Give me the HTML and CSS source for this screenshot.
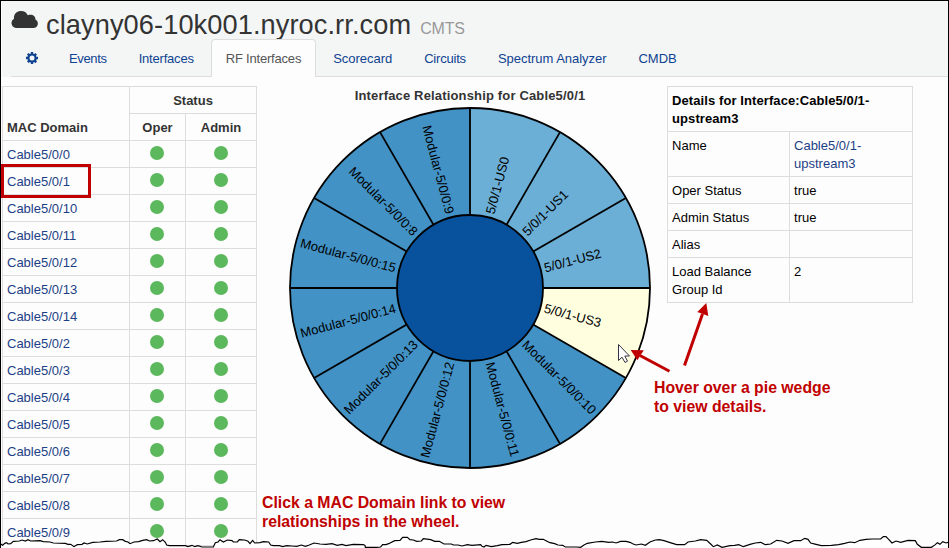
FILE: index.html
```
<!DOCTYPE html>
<html lang="en">
<head>
<meta charset="utf-8">
<title>clayny06-10k001.nyroc.rr.com</title>
<link rel="stylesheet" href="styles.css">
</head>
<body>
<div class="page">
  <header class="header">
    <h1 class="title">
      <svg class="cloud" viewBox="0 0 27 17"><path d="M5 17A5 5 0 0 1 3 7.700C2.500 3 6 0 10 0C13.500 0 15.500 1.500 16.800 4.200C21.500 2.500 24.800 5.500 24.400 8.500A4.500 4.500 0 0 1 22.500 17Z"/></svg>
      <span class="host">clayny06-10k001.nyroc.rr.com</span>
      <small class="kind">CMTS</small>
    </h1>
    <nav class="tabs">
      <a class="tab"><svg class="cog" viewBox="0 -128 1536 1536"><path fill-rule="evenodd" d="M1088 640A320 320 0 1 0 448 640A320 320 0 1 0 1088 640zM1536 531v222q0 12-8 23t-20 13l-185 28q-19 54-39 91 35 50 107 138 10 12 10 25t-9 23q-27 37-99 108t-94 71q-12 0-26-9l-138-108q-44 23-91 38-16 136-29 186-7 28-36 28h-222q-14 0-24.500-8.500t-11.500-21.500l-28-184q-49-16-90-37l-141 107q-10 9-25 9-14 0-25-11-126-114-165-168-7-10-7-23 0-12 8-23 15-21 51-66.500t54-70.500q-27-50-41-99l-183-27q-13-2-21-12.500t-8-23.500v-222q0-12 8-23t19-13l186-28q14-46 39-92-40-57-107-138-10-12-10-24 0-10 9-23 26-36 98.500-107.500t94.500-71.500q13 0 26 10l138 107q44-23 91-38 16-136 29-186 7-28 36-28h222q14 0 24.500 8.500t11.500 21.500l28 184q49 16 90 37l142-107q9-9 24-9 13 0 25 10 129 119 165 170 7 8 7 22 0 12-8 23-15 21-51 66.500t-54 70.500q26 50 41 98l183 28q13 2 21 12.500t8 23.500z"/></svg></a>
      <a class="tab tighter">Events</a>
      <a class="tab tight">Interfaces</a>
      <a class="tab tight active">RF Interfaces</a>
      <a class="tab">Scorecard</a>
      <a class="tab tight">Circuits</a>
      <a class="tab">Spectrum Analyzer</a>
      <a class="tab">CMDB</a>
    </nav>
  </header>

  <main class="content">
    <table class="grid domains">
      <colgroup><col class="c-name"><col class="c-oper"><col class="c-admin"></colgroup>
      <thead>
        <tr><th class="mac" rowspan="2">MAC Domain</th><th colspan="2">Status</th></tr>
        <tr><th>Oper</th><th>Admin</th></tr>
      </thead>
      <tbody>
        <tr><td><a>Cable5/0/0</a></td><td><i class="dot"></i></td><td><i class="dot"></i></td></tr>
        <tr><td class="picked"><a>Cable5/0/1</a></td><td><i class="dot"></i></td><td><i class="dot"></i></td></tr>
        <tr><td><a>Cable5/0/10</a></td><td><i class="dot"></i></td><td><i class="dot"></i></td></tr>
        <tr><td><a>Cable5/0/11</a></td><td><i class="dot"></i></td><td><i class="dot"></i></td></tr>
        <tr><td><a>Cable5/0/12</a></td><td><i class="dot"></i></td><td><i class="dot"></i></td></tr>
        <tr><td><a>Cable5/0/13</a></td><td><i class="dot"></i></td><td><i class="dot"></i></td></tr>
        <tr><td><a>Cable5/0/14</a></td><td><i class="dot"></i></td><td><i class="dot"></i></td></tr>
        <tr><td><a>Cable5/0/2</a></td><td><i class="dot"></i></td><td><i class="dot"></i></td></tr>
        <tr><td><a>Cable5/0/3</a></td><td><i class="dot"></i></td><td><i class="dot"></i></td></tr>
        <tr><td><a>Cable5/0/4</a></td><td><i class="dot"></i></td><td><i class="dot"></i></td></tr>
        <tr><td><a>Cable5/0/5</a></td><td><i class="dot"></i></td><td><i class="dot"></i></td></tr>
        <tr><td><a>Cable5/0/6</a></td><td><i class="dot"></i></td><td><i class="dot"></i></td></tr>
        <tr><td><a>Cable5/0/7</a></td><td><i class="dot"></i></td><td><i class="dot"></i></td></tr>
        <tr><td><a>Cable5/0/8</a></td><td><i class="dot"></i></td><td><i class="dot"></i></td></tr>
        <tr><td><a>Cable5/0/9</a></td><td><i class="dot"></i></td><td><i class="dot"></i></td></tr>
      </tbody>
    </table>

    <section class="chart">
      <h2 class="chart-title">Interface Relationship for Cable5/0/1</h2>
      <svg class="wheel" viewBox="-182 -182 364 364">
        <circle r="180" fill="#4292c6"/>
        <path d="M0 0V-180A180 180 0 0 1 180 0Z" fill="#6baed6"/>
        <path d="M0 0H180A180 180 0 0 1 155.880 90Z" fill="#ffffe0"/>
        <g class="lines">
          <path d="M-180 0H180M0-180V180M-155.880-90L155.880 90M-155.880 90L155.880-90M-90-155.880L90 155.880M-90 155.880L90-155.880"/>
          <circle r="180" fill="none"/>
          <circle r="73" fill="#08519c"/>
        </g>
        <g class="labels">
          <text transform="rotate(-75)" x="77" y="4.500">5/0/1-US0</text>
          <text transform="rotate(-45)" x="77" y="4.500">5/0/1-US1</text>
          <text transform="rotate(-15)" x="77" y="4.500">5/0/1-US2</text>
          <text transform="rotate(15)" x="77" y="4.500">5/0/1-US3</text>
          <text transform="rotate(45)" x="77" y="4.500">Modular-5/0/0:10</text>
          <text transform="rotate(75)" x="77" y="4.500">Modular-5/0/0:11</text>
          <g text-anchor="end">
            <text transform="rotate(-75)" x="-77" y="4.500">Modular-5/0/0:12</text>
            <text transform="rotate(-45)" x="-77" y="4.500">Modular-5/0/0:13</text>
            <text transform="rotate(-15)" x="-77" y="4.500">Modular-5/0/0:14</text>
            <text transform="rotate(15)" x="-77" y="4.500">Modular-5/0/0:15</text>
            <text transform="rotate(45)" x="-77" y="4.500">Modular-5/0/0:8</text>
            <text transform="rotate(75)" x="-77" y="4.500">Modular-5/0/0:9</text>
          </g>
        </g>
      </svg>
    </section>

    <table class="grid details">
      <colgroup><col class="c-key"><col class="c-value"></colgroup>
      <tbody>
        <tr><th colspan="2">Details for Interface:Cable5/0/1-<br>upstream3</th></tr>
        <tr><td>Name</td><td><a>Cable5/0/1-<br>upstream3</a></td></tr>
        <tr><td>Oper Status</td><td>true</td></tr>
        <tr><td>Admin Status</td><td>true</td></tr>
        <tr><td>Alias</td><td></td></tr>
        <tr><td>Load Balance<br>Group Id</td><td>2</td></tr>
      </tbody>
    </table>
  </main>

  <p class="note note-click">Click a MAC Domain link to view<br>relationships in the wheel.</p>
  <p class="note note-hover">Hover over a pie wedge<br>to view details.</p>

  <svg class="arrows" viewBox="600 290 120 90">
    <g stroke="#c00000" stroke-width="3"><path d="M669.500 371.300L640 355.500"/><path d="M684.500 365.500L702.500 314"/></g>
    <g fill="#c00000"><path d="M630.700 350L643.800 350.200L637.300 360.300Z"/><path d="M706.300 303L708.300 316L697.300 312Z"/></g>
    <path d="M618.500 344.500V360.500L622 357.200L625 362.500L627.500 361.200L624.800 356H629.500Z" fill="#fff" stroke="#334" stroke-width="1"/>
  </svg>

  <svg class="torn" viewBox="0 0 2847 54">
    <defs><path id="tear" d="M0 41L8 46L14 40L20 38L24 42L32 41L40 34L58 33L66 30L76 33L84 29L92 33L120 32L130 35L150 36L160 39L196 40L204 43L212 43L222 50L232 44L246 43L252 39L262 42L278 37L300 36L318 34L350 33L358 29L368 29L376 34L384 36L390 41L402 36L416 35L428 31L440 29L448 33L460 32L472 27L480 35L488 29L496 37L500 45L508 47L556 47L564 50L576 46L584 50L594 47L606 51L640 51L646 38L654 36L660 29L670 36L682 30L696 32L700 36L712 36L718 29L734 30L744 34L750 41L758 31L764 39L780 38L790 35L806 36L812 45L820 47L838 47L848 50L860 47L876 48L890 49L904 45L916 49L928 45L942 39L960 42L978 43L996 41L1012 46L1026 43L1038 47L1060 43L1090 44L1095 46L1096 52L1130 52L1142 51L1148 44L1158 44L1166 41L1184 32L1200 31L1208 22L1222 22L1230 29L1240 30L1250 34L1264 33L1270 26L1292 29L1304 34L1318 34L1332 42L1354 42L1360 45L1374 45L1386 48L1402 44L1416 46L1442 44L1446 49L1452 51L1458 46L1474 50L1492 47L1506 44L1530 43L1538 37L1552 40L1564 37L1578 35L1592 30L1608 26L1618 28L1630 28L1638 32L1650 38L1664 41L1674 45L1688 46L1696 51L1730 51L1742 52L1752 45L1762 40L1786 36L1806 34L1826 37L1838 36L1848 39L1862 34L1878 34L1890 37L1898 41L1908 45L1924 42L1936 46L1950 36L1966 30L1978 29L1992 32L2008 37L2030 44L2054 44L2064 36L2086 33L2102 29L2120 31L2132 42L2140 50L2152 45L2166 52L2190 47L2204 46L2216 44L2230 50L2250 43L2266 39L2282 37L2296 44L2312 42L2330 31L2346 33L2364 40L2382 32L2402 32L2414 25L2424 28L2432 39L2448 43L2464 47L2494 46L2516 44L2534 40L2550 36L2564 38L2580 31L2598 28L2616 27L2642 27L2650 20L2658 20L2666 28L2676 39L2688 33L2702 37L2724 31L2746 32L2752 43L2764 52L2794 52L2806 44L2812 38L2820 43L2828 35L2838 39L2847 36V70H0Z"/></defs>
    <use href="#tear" class="edge"/>
  </svg>
</div>
</body>
</html>
```

FILE: styles.css
```
*, *::after { box-sizing: border-box; }
body {
  margin: 0;
  background: #fdfdfd;
  color: #333;
  font: 13px/18px "Liberation Sans", Arial, sans-serif;
}
.page {
  position: relative;
  width: 949px;
  height: 548px;
  overflow: hidden;
  border: 1px solid #000;
  border-bottom: 0;
  padding-left: 1px;
}
.header { height: 76px; background: #f4f6f6; padding-left: 9px; }
.title {
  display: flex;
  align-items: baseline;
  height: 38px;
  margin: 0;
  font-weight: 400;
  font-size: 27.2px;
  line-height: 48px;
}
.cloud { width: 27px; height: 17px; align-self: flex-start; margin-top: 10px; fill: #333; }
.host { margin-left: 8px; letter-spacing: .09px; white-space: nowrap; }
.kind { margin-left: 9px; font-size: 16px; letter-spacing: -.2px; color: #999; }
.tabs {
  display: flex;
  align-items: flex-end;
  height: 38px;
  border-bottom: 1px solid #ddd;
}
.tab {
  height: 38px;
  margin: 0 2px -1px 0;
  padding: 10px 14px 0;
  border: 1px solid transparent;
  border-bottom: 0;
  border-radius: 4px 4px 0 0;
  color: #0f4391;
  letter-spacing: -.03px;
  white-space: nowrap;
}
.tab.tighter { letter-spacing: -.35px; }
.tab.tight { letter-spacing: -.2px; }
.tab.active { color: #555; background: #fdfdfd; border-color: #ddd; }
.cog { display: block; width: 12px; height: 12px; margin: 2px -1px 0 0; fill: #0f4391; }

.content { display: flex; align-items: flex-start; padding-top: 9px; }
.grid {
  table-layout: fixed;
  border-collapse: separate;
  border-spacing: 0;
  border: solid #ddd;
  border-width: 1px 0 0 1px;
}
.grid th, .grid td {
  padding: 5px 4px 3px;
  border: solid #ddd;
  border-width: 0 1px 1px 0;
  text-align: left;
  vertical-align: top;
}
.grid a { color: #1c3f86; }
.domains { width: 255px; }
.grid.domains th { text-align: center; }
.grid.domains .mac { text-align: left; vertical-align: bottom; }
.c-name { width: 127px; }
.c-oper { width: 56px; }
.c-admin { width: 71px; }
.dot {
  display: block;
  width: 14px;
  height: 14px;
  margin: 0 auto 4px;
  border-radius: 50%;
  background: #5cb85c;
}
td:nth-child(2) .dot { margin-left: 16px; }
.picked { position: relative; }
.picked::after {
  content: "";
  position: absolute;
  left: -2px;
  top: -4px;
  width: 90px;
  height: 34px;
  border: 3px solid #c00000;
}

.chart { width: 364px; margin-left: 31px; text-align: center; }
.chart-title {
  margin: 0;
  padding: 1px 0;
  font-size: 13px;
  line-height: 18px;
  letter-spacing: .16px;
}
.wheel { display: block; width: 364px; height: 364px; }
.lines { stroke: #000; stroke-width: 1.8; }
.labels { font-size: 13px; fill: #000; }

.details { width: 246px; margin-left: 15px; color: #000; }
.details th { letter-spacing: .09px; }
.details td:empty { height: 27px; }
.c-key { width: 122px; }
.c-value { width: 123px; }

.note {
  position: absolute;
  margin: 0;
  color: #c00000;
  font-size: 15.8px;
  font-weight: 700;
  line-height: 19px;
  white-space: nowrap;
}
.note-click { left: 261px; top: 492px; }
.note-hover { left: 653px; top: 377px; }
.arrows { position: absolute; left: 599px; top: 289px; width: 120px; height: 90px; }
.torn { position: absolute; left: -1px; top: 529px; width: 949px; height: 18px; }
.edge { fill: #fff; stroke: #000; stroke-width: 3.500; }
```
